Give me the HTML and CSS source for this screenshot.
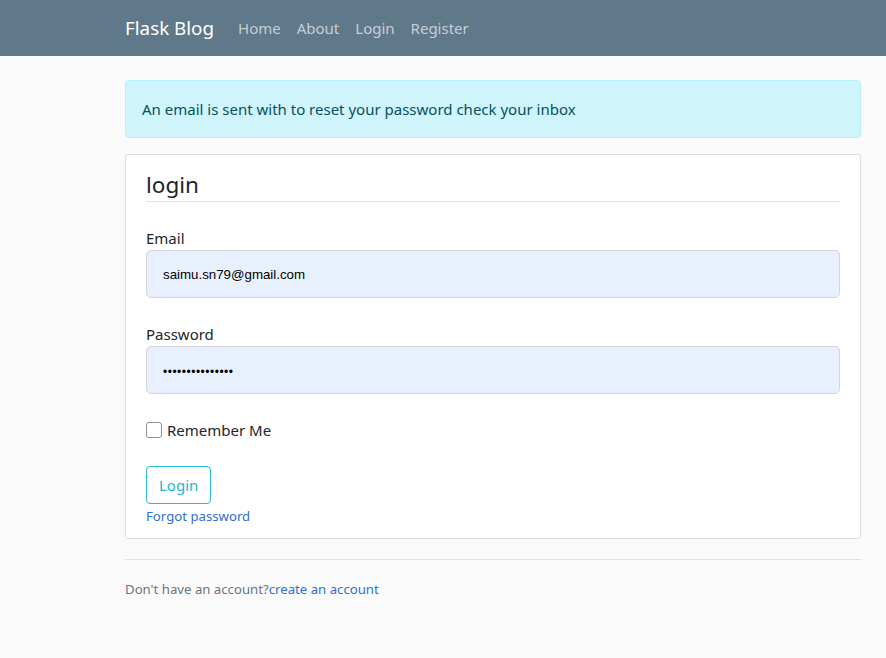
FILE: index.html
```html
<!DOCTYPE html>
<html lang="en">
<head>
<meta charset="utf-8">
<title>Flask Blog - Login</title>
<link rel="stylesheet" href="styles.css">
</head>
<body>
<header class="navbar">
  <div class="nav-inner">
    <a class="brand" href="#">Flask Blog</a>
    <nav class="nav-links">
      <a href="#">Home</a>
      <a href="#">About</a>
      <a href="#">Login</a>
      <a href="#">Register</a>
    </nav>
  </div>
</header>
<main class="main">
  <div class="alert">An email is sent with to reset your password check your inbox</div>
  <div class="content-section">
    <form>
      <fieldset class="fieldset">
        <legend class="legend">login</legend>
        <div class="group">
          <label class="label" for="email">Email</label>
          <input class="control" id="email" type="text" value="saimu.sn79@gmail.com" readonly>
        </div>
        <div class="group">
          <label class="label" for="pw">Password</label>
          <input class="control pw" id="pw" type="password" value="abcdefghijklmno" readonly>
        </div>
        <div class="check">
          <span class="box"></span>
          <span class="check-label">Remember Me</span>
        </div>
      </fieldset>
      <div class="actions">
        <button class="btn" type="button">Login</button>
        <a class="small-link" href="#">Forgot password</a>
      </div>
    </form>
  </div>
  <div class="footer-note">
    <span class="muted">Don't have an account?</span><a class="link" href="#">create an account</a>
  </div>
</main>
</body>
</html>
```

FILE: styles.css
```css
* { box-sizing: border-box; }
html, body { margin: 0; padding: 0; }
body {
  background: #fafafa;
  font-family: "Noto Sans", "Open Sans", sans-serif;
  font-size: 15px;
  line-height: 24px;
  color: #212529;
  height: 658px;
  overflow: hidden;
}
a { text-decoration: none; }

.navbar {
  height: 56px;
  background: #5f788a;
}
.nav-inner {
  margin-left: 125px;
  height: 56px;
  display: flex;
  align-items: center;
}
.brand {
  color: #fff;
  font-size: 18.8px;
  margin-right: 16px;
}
.nav-links { display: flex; }
.nav-links a {
  color: rgba(255,255,255,0.65);
  padding: 0 8px;
}

.main {
  margin-left: 125px;
  width: 736px;
  padding-top: 24px;
}
.alert {
  background: #cff4fc;
  border: 1px solid #b6effb;
  color: #055160;
  border-radius: 4px;
  padding: 16px;
  margin-bottom: 16px;
}
.content-section {
  background: #fff;
  border: 1px solid #dddddd;
  border-radius: 3px;
  padding: 10px 20px 11px;
  margin-bottom: 20px;
}
.fieldset { border: 0; margin: 0; padding: 0; min-width: 0; }
.legend {
  float: left;
  width: 100%;
  padding: 2px 0 0;
  height: 37px;
  font-size: 22.5px;
  line-height: 36px;
  border-bottom: 1px solid #dee2e6;
  margin-bottom: 24px;
  color: #212529;
}
.group { clear: both; margin-bottom: 24px; }
.label { display: block; color: #212529; }
.control {
  display: block;
  width: 100%;
  height: 48px;
  padding: 8px 16px;
  background: #e8f0fe;
  border: 1px solid #ced4da;
  border-radius: 5px;
  font-family: "Liberation Sans", Arial, sans-serif;
  font-size: 13.3px;
  color: #000;
  outline: none;
}
.pw { font-size: 12px; letter-spacing: 0.5px; padding-top: 11px; }
.check {
  display: flex;
  align-items: center;
  height: 24px;
  margin-bottom: 24px;
}
.box {
  width: 16px;
  height: 16px;
  border: 1px solid #8a8f94;
  border-radius: 3px;
  background: #fff;
  margin-right: 5px;
}
.actions { display: flex; flex-direction: column; align-items: flex-start; }
.btn {
  font-family: inherit;
  font-size: 15px;
  line-height: 24px;
  padding: 6px 12px;
  color: #22b6cf;
  background: transparent;
  border: 1px solid #22bbd3;
  border-radius: 4px;
}
.small-link {
  font-size: 13.2px;
  line-height: 21px;
  color: #2f6fd8;
  margin-top: 2px;
}
.footer-note {
  border-top: 1px solid #dee2e6;
  padding-top: 19px;
  font-size: 13.2px;
  line-height: 21px;
}
.muted { color: #6c757d; }
.link { color: #2f6fd8; }
```
